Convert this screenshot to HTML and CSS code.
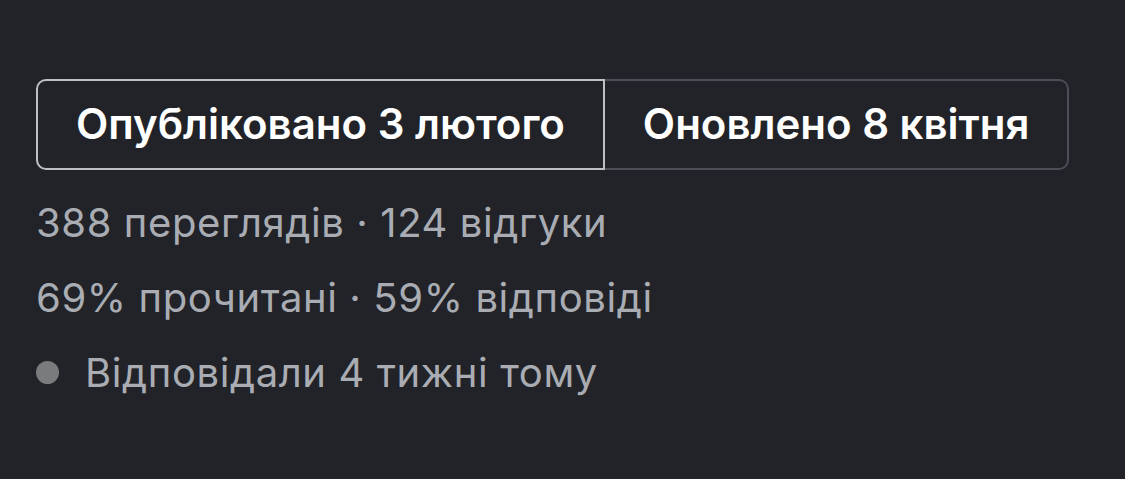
FILE: index.html
```html
<!DOCTYPE html>
<html lang="uk">
<head>
  <meta charset="UTF-8" />
  <meta name="viewport" content="width=device-width, initial-scale=1.0"/>
  <title>Статистика</title>
  <link rel="stylesheet" href="styles.css">
</head>
<body>
  <div class="tabs">
    <button class="tab tab-active">Опубліковано 3 лютого</button>
    <button class="tab">Оновлено 8 квітня</button>
  </div>

  <div class="stats">
    <p class="stat-line">388 переглядів · 124 відгуки</p>
    <p class="stat-line">69% прочитані · 59% відповіді</p>
    <p class="stat-line status"><span class="dot"></span>Відповідали 4 тижні тому</p>
  </div>
</body>
</html>
```

FILE: styles.css
```css
body {
  margin: 0;
  padding: 79px 36px 0;
  background-color: #212328;
  font-family: Inter, 'Noto Sans', sans-serif;
  color: #a9adb3;
}

.tabs {
  display: flex;
}

.tab {
  font-family: inherit;
  font-size: 42px;
  font-weight: 600;
  line-height: 50px;
  color: #ffffff;
  background-color: #212328;
  padding: 18px 38px 19px;
  border: 2px solid #4b4e55;
  cursor: pointer;
}

.tab-active {
  border-color: #bfc0c2;
  border-radius: 10px 0 0 10px;
}

.tab + .tab {
  border-left: none;
  border-radius: 0 10px 10px 0;
}

.stats {
  margin-top: 15px;
}

.stat-line {
  margin: 0;
  font-size: 40px;
  letter-spacing: 0.6px;
  line-height: 75px;
}

.status {
  display: flex;
  align-items: center;
  gap: 26px;
}

.dot {
  width: 23px;
  height: 23px;
  border-radius: 50%;
  background-color: #7a7b7d;
}
```
